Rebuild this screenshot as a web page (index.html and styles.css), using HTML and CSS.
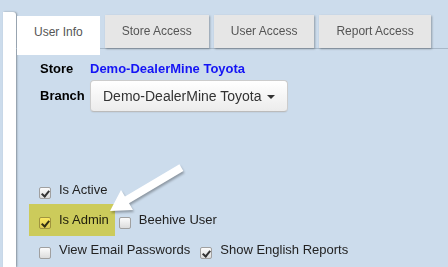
FILE: index.html
```html
<!DOCTYPE html>
<html lang="en">
<head>
    <meta charset="UTF-8">
    <meta name="viewport" content="width=device-width, initial-scale=1.0">
    <title>Edit User</title>
    <link rel="stylesheet" href="styles.css">
</head>
<body>
    <div class="page">
        <div class="rail"></div>
        <div class="main">
            <div class="tabs">
                <div class="tab active">User Info</div>
                <div class="tab">Store Access</div>
                <div class="tab">User Access</div>
                <div class="tab">Report Access</div>
            </div>
            <div class="content">
                <div class="fields">
                    <div class="field">
                        <span class="label">Store</span>
                        <span class="store-name">Demo-DealerMine Toyota</span>
                    </div>
                    <div class="field branch">
                        <span class="label">Branch</span>
                        <button class="dropdown">Demo-DealerMine Toyota <span class="caret"></span></button>
                    </div>
                </div>
                <div class="checks">
                    <div class="check-row">
                        <label class="check"><input type="checkbox" checked> Is Active</label>
                    </div>
                    <div class="check-row">
                        <label class="check highlight"><input type="checkbox" checked> Is Admin</label>
                        <label class="check"><input type="checkbox"> Beehive User</label>
                    </div>
                    <div class="check-row">
                        <label class="check"><input type="checkbox"> View Email Passwords</label>
                        <label class="check"><input type="checkbox" checked> Show English Reports</label>
                    </div>
                </div>
            </div>
        </div>
    </div>
    <svg class="arrow" width="448" height="267" viewBox="0 0 448 267">
        <polygon points="110,211 121,190 125,196.5 179.4,164.3 183.4,171.1 129,203.3 133,210" fill="#fff"/>
    </svg>
</body>
</html>
```

FILE: styles.css
```css
body {
    margin: 0;
    background-color: #ccdcec;
    font-family: "Liberation Sans", Arial, sans-serif;
    font-size: 13px;
    line-height: 16px;
    color: #222;
    height: 267px;
    overflow: hidden;
}

.page {
    display: flex;
    height: 100%;
}

.rail {
    width: 13px;
    margin-left: 3px;
    margin-top: 12px;
    background-color: #fff;
    border-top-right-radius: 3px;
    box-shadow: 1px 0 2px rgba(0, 0, 0, 0.35);
}

.main {
    flex: 1;
    padding-top: 15px;
}

.tabs {
    display: flex;
    gap: 5px;
    padding-left: 1px;
    height: 33px;
    border-bottom: 1px solid #a8b8c8;
}

.tab {
    padding: 0 17px;
    height: 33px;
    line-height: 33px;
    font-size: 12px;
    color: #555;
    background-color: #e6e6e6;
    box-shadow: 1px 1px 2px rgba(0, 0, 0, 0.3);
}

.tab.active {
    background-color: #fff;
    height: 39px;
    margin-top: 1px;
    line-height: 33px;
    box-shadow: none;
    position: relative;
    z-index: 1;
}

.content {
    padding-left: 23px;
}

.fields {
    padding-left: 1px;
    padding-top: 12px;
}

.field {
    display: flex;
    align-items: center;
}

.label {
    width: 50px;
    font-weight: bold;
    color: #000;
}

.store-name {
    font-weight: bold;
    color: #1414f5;
}

.branch {
    margin-top: 3px;
}

.dropdown {
    height: 32px;
    padding: 0 12px;
    font-family: "Liberation Sans", Arial, sans-serif;
    font-size: 14px;
    color: #333;
    background: linear-gradient(#fff, #ececec);
    border: 1px solid #ccc;
    border-bottom-color: #bbb;
    border-radius: 4px;
    box-shadow: 0 1px 1px rgba(0, 0, 0, 0.05);
}

.caret {
    display: inline-block;
    margin-left: 2px;
    vertical-align: middle;
    border-top: 4px solid #333;
    border-left: 4px solid transparent;
    border-right: 4px solid transparent;
}

.checks {
    margin-top: 63px;
}

.check-row {
    display: flex;
    height: 30px;
    align-items: center;
}

.check {
    display: flex;
    align-items: center;
    margin-right: 10px;
    position: relative;
}

.check input {
    appearance: none;
    width: 12px;
    height: 12px;
    margin: 5px 8px 0 0;
    border: 1px solid #a0a0a0;
    border-radius: 2px;
    background: linear-gradient(#fcfcfc, #dcdcdc);
    position: relative;
}

.check input:checked::after {
    content: "";
    position: absolute;
    left: 3px;
    top: 1px;
    width: 3px;
    height: 6px;
    border-right: 2px solid #333;
    border-bottom: 2px solid #333;
    transform: rotate(40deg);
}

.highlight::after {
    content: "";
    position: absolute;
    top: -8px;
    bottom: -7px;
    left: -10px;
    right: -6px;
    background-color: #ffec62;
    mix-blend-mode: multiply;
}

.arrow {
    position: absolute;
    left: 0;
    top: 0;
    pointer-events: none;
    filter: drop-shadow(1px 2px 1px rgba(0, 0, 0, 0.3));
}
```
